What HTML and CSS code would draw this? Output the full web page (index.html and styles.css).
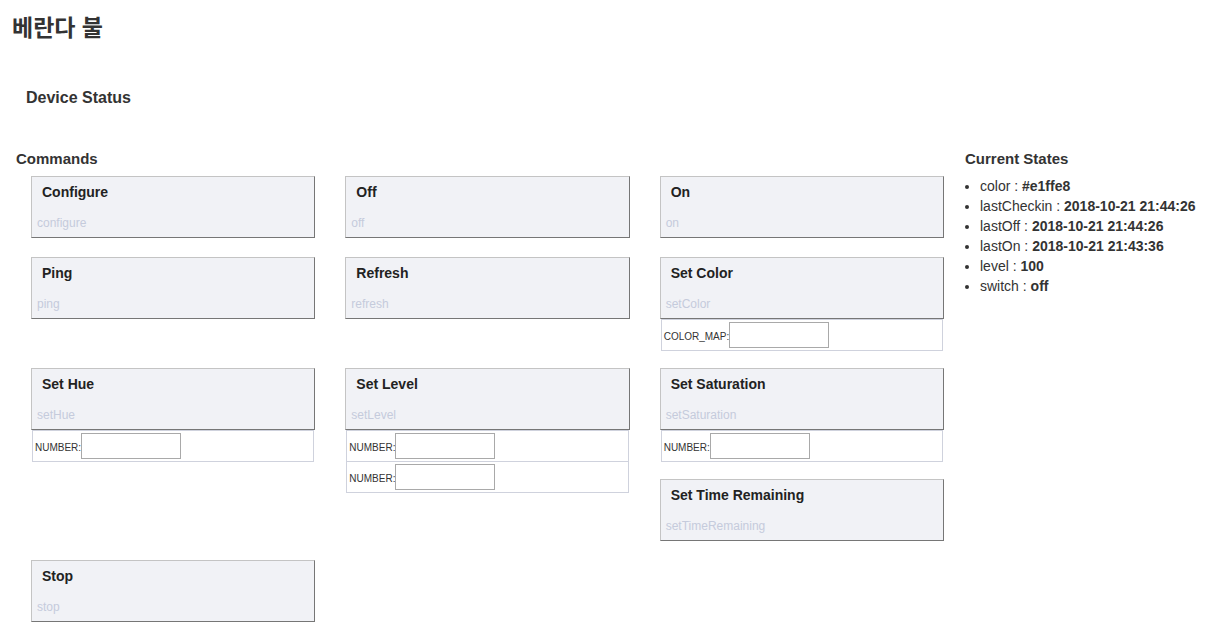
FILE: index.html
```html
<!DOCTYPE html>
<html lang="ko">
<head>
<meta charset="utf-8">
<title>베란다 불</title>
<link rel="stylesheet" href="styles.css">
</head>
<body>
<h1 class="page-title">베란다 불</h1>
<h2 class="section-title">Device Status</h2>
<div class="panels">
  <section class="commands">
    <h3 class="panel-title">Commands</h3>
    <div class="cmd-grid">
      <div class="cmd plain">
        <button class="cmd-btn"><span class="cmd-name">Configure</span><span class="cmd-method">configure</span></button>
      </div>
      <div class="cmd plain">
        <button class="cmd-btn"><span class="cmd-name">Off</span><span class="cmd-method">off</span></button>
      </div>
      <div class="cmd plain">
        <button class="cmd-btn"><span class="cmd-name">On</span><span class="cmd-method">on</span></button>
      </div>
      <div class="cmd plain">
        <button class="cmd-btn"><span class="cmd-name">Ping</span><span class="cmd-method">ping</span></button>
      </div>
      <div class="cmd plain">
        <button class="cmd-btn"><span class="cmd-name">Refresh</span><span class="cmd-method">refresh</span></button>
      </div>
      <div class="cmd">
        <button class="cmd-btn"><span class="cmd-name">Set Color</span><span class="cmd-method">setColor</span></button>
        <table class="args">
          <tr><td>COLOR_MAP:<input class="arg-input" type="text"></td></tr>
        </table>
      </div>
      <div class="cmd">
        <button class="cmd-btn"><span class="cmd-name">Set Hue</span><span class="cmd-method">setHue</span></button>
        <table class="args">
          <tr><td>NUMBER:<input class="arg-input" type="text"></td></tr>
        </table>
      </div>
      <div class="cmd">
        <button class="cmd-btn"><span class="cmd-name">Set Level</span><span class="cmd-method">setLevel</span></button>
        <table class="args">
          <tr><td>NUMBER:<input class="arg-input" type="text"></td></tr>
          <tr><td>NUMBER:<input class="arg-input" type="text"></td></tr>
        </table>
      </div>
      <div class="cmd">
        <button class="cmd-btn"><span class="cmd-name">Set Saturation</span><span class="cmd-method">setSaturation</span></button>
        <table class="args">
          <tr><td>NUMBER:<input class="arg-input" type="text"></td></tr>
        </table>
      </div>
      <div class="cmd plain">
        <button class="cmd-btn"><span class="cmd-name">Set Time Remaining</span><span class="cmd-method">setTimeRemaining</span></button>
      </div>
      <div class="cmd plain">
        <button class="cmd-btn"><span class="cmd-name">Stop</span><span class="cmd-method">stop</span></button>
      </div>
    </div>
  </section>
  <section class="states">
    <h3 class="panel-title">Current States</h3>
    <ul class="state-list">
      <li>color : <b>#e1ffe8</b></li>
      <li>lastCheckin : <b>2018-10-21 21:44:26</b></li>
      <li>lastOff : <b>2018-10-21 21:44:26</b></li>
      <li>lastOn : <b>2018-10-21 21:43:36</b></li>
      <li>level : <b>100</b></li>
      <li>switch : <b>off</b></li>
    </ul>
  </section>
</div>
</body>
</html>
```
FILE: styles.css
```css
html, body {
  margin: 0;
  padding: 0;
  background: #ffffff;
}

body {
  font-family: "Liberation Sans", Arial, "Noto Sans CJK KR", sans-serif;
  color: #333333;
  font-size: 14px;
}

.page-title {
  margin: 0;
  padding: 12px 0 0 12px;
  font-family: "Liberation Sans", "Noto Sans CJK KR", sans-serif;
  font-size: 23px;
  line-height: 32px;
  font-weight: bold;
  color: #333333;
}

.section-title {
  margin: 44px 0 0 26px;
  font-size: 16px;
  line-height: 20px;
  font-weight: bold;
  color: #333333;
}

.panels {
  display: flex;
  align-items: flex-start;
  margin-top: 41px;
  padding-left: 16px;
}

.commands {
  width: 943px;
  flex: none;
}

.panel-title {
  margin: 0 0 7px 0;
  font-size: 15px;
  line-height: 20px;
  font-weight: bold;
  color: #333333;
}

.cmd-grid {
  display: flow-root;
}

.cmd {
  float: left;
  width: 33.3333%;
  box-sizing: border-box;
  padding: 0 15px;
  margin-bottom: 17px;
}

.cmd.plain {
  margin-bottom: 19px;
}

.cmd-btn {
  display: flex;
  flex-direction: column;
  align-items: flex-start;
  width: 100%;
  height: 62px;
  box-sizing: border-box;
  margin: 0;
  padding: 7px 0 0 0;
  background: #f1f2f6;
  border: 1px solid;
  border-color: #c4c4c4 #767676 #767676 #c4c4c4;
  text-align: left;
  font-family: "Liberation Sans", Arial, sans-serif;
  cursor: pointer;
}

.cmd-name {
  padding-left: 10px;
  font-size: 14px;
  line-height: 16px;
  font-weight: bold;
  color: #222222;
}

.cmd-method {
  margin-top: 16px;
  padding-left: 5px;
  font-size: 12px;
  line-height: 14px;
  color: #c5cbdc;
}

.args {
  width: calc(100% - 2px);
  margin: 0 1px;
  border-collapse: collapse;
}

.args td {
  border: 1px solid #cfd2dd;
  padding: 2px 1px 2px 2px;
  font-size: 10px;
  line-height: 12px;
  color: #333333;
  white-space: nowrap;
}

.arg-input {
  width: 100px;
  height: 26px;
  box-sizing: border-box;
  margin: 0;
  padding: 1px 2px;
  border: 1px solid #a9a9a9;
  vertical-align: 1px;
  font-size: 12px;
}

.states {
  margin-left: 6px;
  flex: 1;
}

.state-list {
  margin: 0;
  padding-left: 15px;
  font-size: 14px;
  line-height: 20px;
}

.state-list b {
  font-weight: bold;
}
```
